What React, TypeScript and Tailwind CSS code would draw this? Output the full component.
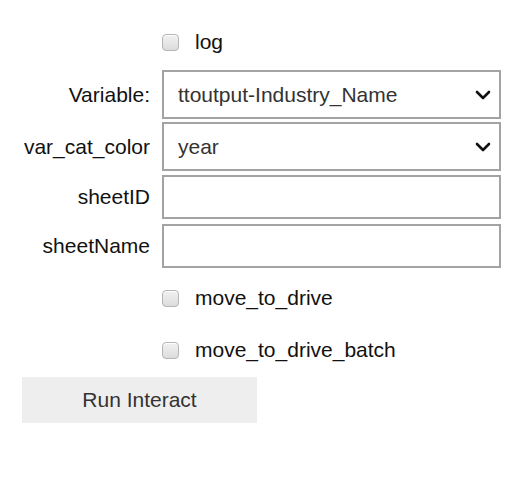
import React from "react";

const font = { fontFamily: '"Liberation Sans", Arial, sans-serif' };

const Checkbox = ({ label }: { label: string }) => (
  <div className="flex items-center h-[36px] pl-[162px]">
    <span className="w-[17px] h-[17px] rounded-[4px] border border-[#b5b5b5] bg-gradient-to-b from-[#f2f2f2] to-[#dcdcdc] shadow-[inset_0_1px_0_#fff]" />
    <span className="ml-[16px] text-[21px] text-[#111]">{label}</span>
  </div>
);

const Chevron = () => (
  <svg width="16" height="10" viewBox="0 0 16 10" className="shrink-0">
    <path d="M2 2 L8 8 L14 2" fill="none" stroke="#111" strokeWidth="2.6" strokeLinecap="round" strokeLinejoin="round" />
  </svg>
);

const Row = ({ label, h, children }: { label: string; h: string; children: React.ReactNode }) => (
  <div className={`flex items-center ${h}`}>
    <label className="w-[150px] shrink-0 text-right text-[21px] text-[#111] whitespace-nowrap">{label}</label>
    <div className="ml-[12px] w-[339px] h-full">{children}</div>
  </div>
);

const Select = ({ value }: { value: string }) => (
  <div className="h-full flex items-center justify-between border-2 border-[#a3a3a3] pl-[14px] pr-[8px]">
    <span className="text-[21px] text-[#333]">{value}</span>
    <Chevron />
  </div>
);

const Input = () => <div className="h-full border-2 border-[#a3a3a3] bg-white" />;

export default function App() {
  return (
    <div className="w-[528px] h-[494px] bg-white pt-[24px]" style={font}>
      <Checkbox label="log" />
      <div className="mt-[10px] flex flex-col">
        <Row label="Variable:" h="h-[49px]">
          <Select value="ttoutput-Industry_Name" />
        </Row>
        <div className="mt-[3px]">
          <Row label="var_cat_color" h="h-[49px]">
            <Select value="year" />
          </Row>
        </div>
        <div className="mt-[4px]">
          <Row label="sheetID" h="h-[44px]">
            <Input />
          </Row>
        </div>
        <div className="mt-[5px]">
          <Row label="sheetName" h="h-[44px]">
            <Input />
          </Row>
        </div>
      </div>
      <div className="mt-[12px]">
        <Checkbox label="move_to_drive" />
      </div>
      <div className="mt-[16px]">
        <Checkbox label="move_to_drive_batch" />
      </div>
      <button className="mt-[9px] ml-[22px] w-[235px] h-[46px] bg-[#eeeeee] text-[21px] text-[#333]">
        Run Interact
      </button>
    </div>
  );
}
